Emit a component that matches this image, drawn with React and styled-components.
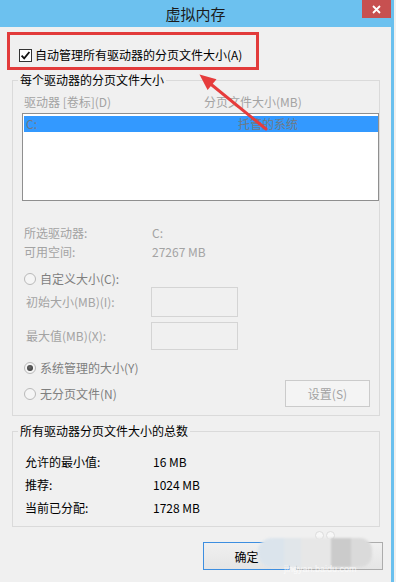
import React from "react";
import styled, { createGlobalStyle } from "styled-components";

const GlobalStyle = createGlobalStyle`
  html, body { margin: 0; padding: 0; background: #f0f0f0; }
  body {
    font-family: "Noto Sans CJK SC", "Microsoft YaHei", "Noto Sans", sans-serif;
    font-size: 12px;
    -webkit-font-smoothing: antialiased;
  }
  * { box-sizing: border-box; }
`;

const Window = styled.div`
  position: relative;
  width: 394px;
  height: 582px;
  border-right: 3px solid #6ac0ee;
  background: #f0f0f0;
  display: flex;
  flex-direction: column;
  overflow: hidden;
`;

const TitleBar = styled.div`
  flex-shrink: 0;
  height: 27px;
  background: #6cc1ef;
  display: grid;
  grid-template-columns: 1fr auto 1fr;
  align-items: start;
`;

const Title = styled.div`
  grid-column: 2;
  line-height: 27px;
  font-size: 15px;
  color: #1b1b1b;
`;

const CloseButton = styled.div`
  grid-column: 3;
  justify-self: end;
  width: 29px;
  height: 18px;
  background: #c75050;
  display: flex;
  align-items: center;
  justify-content: center;
`;

const Body = styled.div`
  display: flex;
  flex-direction: column;
  padding-left: 12px;
`;

const CheckRow = styled.div`
  position: relative;
  display: flex;
  align-items: center;
  height: 16px;
  margin-top: 20px;
  padding-left: 7px;
`;

const CheckBox = styled.div`
  width: 13px;
  height: 13px;
  border: 1px solid #333;
  background: #fff;
  display: flex;
  align-items: center;
  justify-content: center;
`;

const Text = styled.span`
  margin-left: ${(p) => p.$ml || 0}px;
  padding-left: ${(p) => p.$pl || 0}px;
  line-height: 16px;
  color: ${(p) => p.$color || "#000"};
  white-space: nowrap;
`;

const Highlight = styled.div`
  position: absolute;
  left: -5px;
  top: -15px;
  width: 252px;
  height: 38px;
  border: 3px solid #e23b3b;
`;

const Group = styled.fieldset`
  width: 368px;
  min-width: 0;
  margin: ${(p) => p.$mt}px 0 0 0;
  padding: 0;
  border: 1px solid #dadada;
`;

const Legend = styled.legend`
  margin-left: 5px;
  padding: 0 2px;
  font-size: 12px;
  line-height: 16px;
  color: #000;
`;

const GroupInner = styled.div`
  display: flex;
  flex-direction: column;
  padding: ${(p) => p.$pad};
`;

const Columns = styled.div`
  display: grid;
  grid-template-columns: ${(p) => p.$cols};
  line-height: ${(p) => p.$lh}px;
  margin-top: ${(p) => p.$mt || 0}px;
  padding-left: ${(p) => p.$pl || 0}px;
  color: ${(p) => p.$color};
  white-space: nowrap;
`;

const ListBox = styled.div`
  margin: 3px 0 0 -2px;
  height: 88px;
  border: 1px solid #8f8f8f;
  background: #fff;
  padding: 2px 0 0 1px;
`;

const ListRow = styled(Columns)`
  background: #3399ff;
  height: 16px;
`;

const RadioRow = styled.div`
  display: flex;
  align-items: center;
  height: ${(p) => p.$h}px;
  margin-top: ${(p) => p.$mt}px;
`;

const Radio = styled.div`
  width: 12px;
  height: 12px;
  border-radius: 50%;
  border: 1px solid #b9b9b9;
  background: #f5f5f5;
  display: flex;
  align-items: center;
  justify-content: center;
  &::after {
    content: "";
    display: ${(p) => (p.$checked ? "block" : "none")};
    width: 6px;
    height: 6px;
    border-radius: 50%;
    background: radial-gradient(circle at 45% 40%, #6a6a6a, #2f2f2f);
  }
`;

const FieldRow = styled.div`
  display: grid;
  grid-template-columns: 127px 87px;
  align-items: center;
  margin-top: ${(p) => p.$mt}px;
`;

const TextBox = styled.div`
  height: ${(p) => p.$h}px;
  border: 1px solid #d4d4d4;
  background: #f0f0f0;
`;

const Button = styled.button`
  width: ${(p) => p.$w}px;
  height: ${(p) => p.$h}px;
  margin: 0 ${(p) => p.$mr || 0}px 0 ${(p) => (p.$push ? "auto" : "0")};
  padding: 0;
  font-family: inherit;
  font-size: 12px;
  border: 1px solid ${(p) => (p.$default ? "#3d8ee0" : p.disabled ? "#cbcbcb" : "#acacac")};
  background: ${(p) =>
    p.disabled ? "#f4f4f4" : "linear-gradient(#f0f0f0, #e5e5e5)"};
  color: ${(p) => (p.disabled ? "#a3a3a3" : "#000")};
`;

const ButtonRow = styled.div`
  display: flex;
  justify-content: flex-end;
  gap: 6px;
  margin-top: 15px;
  padding-right: 8px;
`;

const Arrow = styled.svg`
  position: absolute;
  left: 195px;
  top: 70px;
  pointer-events: none;
`;

const Watermark = styled.div`
  position: absolute;
  left: 258px;
  top: 530px;
  width: 116px;
  height: 44px;
`;

const Blots = styled.div`
  display: flex;
  margin-top: 8px;
  height: 29px;
  filter: blur(0.8px);
`;

const Blot = styled.div`
  width: ${(p) => p.$w}px;
  background: ${(p) => p.$c};
  border-radius: ${(p) => p.$r || "0"};
`;

const Ears = styled.div`
  position: absolute;
  left: 57px;
  top: 1px;
  display: flex;
  gap: 2px;
  &::before, &::after {
    content: "";
    width: 7px;
    height: 7px;
    border-radius: 50%;
    background: #f7f7f7;
    border: 1px solid #dcdcdc;
  }
`;

const Faint = styled.div`
  position: absolute;
  left: 26px;
  top: 34px;
  font-size: 9px;
  line-height: 10px;
  color: rgba(255, 255, 255, 0.75);
  font-family: "Liberation Sans", sans-serif;
  white-space: nowrap;
`;

const DIS = "#a3a3a3";
const RAD = "#7f7f7f";

export default function App() {
  return (
    <>
      <GlobalStyle />
      <Window>
        <TitleBar>
          <Title>虚拟内存</Title>
          <CloseButton>
            <svg width="9" height="9" viewBox="0 0 9 9">
              <path d="M1 1L8 8M8 1L1 8" stroke="#fff" strokeWidth="1.8" />
            </svg>
          </CloseButton>
        </TitleBar>
        <Body>
          <CheckRow>
            <Highlight />
            <CheckBox>
              <svg width="11" height="11" viewBox="0 0 11 11">
                <path d="M1.6 5.6L4.2 8.4L9.4 2" fill="none" stroke="#111" strokeWidth="1.8" />
              </svg>
            </CheckBox>
            <Text $ml={3}>自动管理所有驱动器的分页文件大小(A)</Text>
          </CheckRow>

          <Group $mt={9}>
            <Legend>每个驱动器的分页文件大小</Legend>
            <GroupInner $pad="0 0 8px 11px">
              <Columns $cols="180px 1fr" $lh={16} $mt={6} $color={DIS}>
                <span>驱动器 [卷标](D)</span>
                <span>分页文件大小(MB)</span>
              </Columns>
              <ListBox>
                <ListRow $cols="212px 1fr" $lh={16} $pl={2} $color="#6f7a86">
                  <span>C:</span>
                  <span>托管的系统</span>
                </ListRow>
              </ListBox>
              <Columns $cols="128px 1fr" $lh={19} $mt={22} $color={DIS}>
                <span>所选驱动器:</span>
                <span>C:</span>
                <span>可用空间:</span>
                <span>27267 MB</span>
              </Columns>
              <RadioRow $h={16} $mt={10}>
                <Radio />
                <Text $ml={4} $color={RAD}>自定义大小(C):</Text>
              </RadioRow>
              <FieldRow $mt={0}>
                <Text $pl={2} $color={DIS}>初始大小(MB)(I):</Text>
                <TextBox $h={30} />
              </FieldRow>
              <FieldRow $mt={5}>
                <Text $pl={2} $color={DIS}>最大值(MB)(X):</Text>
                <TextBox $h={28} />
              </FieldRow>
              <RadioRow $h={16} $mt={10}>
                <Radio $checked />
                <Text $ml={4} $color={RAD}>系统管理的大小(Y)</Text>
              </RadioRow>
              <RadioRow $h={27} $mt={4}>
                <Radio />
                <Text $ml={4} $color={RAD}>无分页文件(N)</Text>
                <Button disabled $w={85} $h={27} $push $mr={9}>设置(S)</Button>
              </RadioRow>
            </GroupInner>
          </Group>

          <Group $mt={7}>
            <Legend>所有驱动器分页文件大小的总数</Legend>
            <GroupInner $pad="11px 0 7px 12px">
              <Columns $cols="128px 1fr" $lh={23} $color="#000">
                <span>允许的最小值:</span>
                <span>16 MB</span>
                <span>推荐:</span>
                <span>1024 MB</span>
                <span>当前已分配:</span>
                <span>1728 MB</span>
              </Columns>
            </GroupInner>
          </Group>

          <ButtonRow>
            <Button $default $w={87} $h={28}>确定</Button>
            <Button $w={87} $h={28}>取消</Button>
          </ButtonRow>
        </Body>

        <Arrow width="76" height="64" viewBox="0 0 76 64">
          <line x1="15" y1="13.5" x2="71" y2="59" stroke="#e63c3c" strokeWidth="3" strokeLinecap="round" />
          <polygon points="4.5,4.5 12.6,20 21.5,9.2" fill="#e63c3c" />
        </Arrow>

        <Watermark>
          <Ears />
          <Blots>
            <Blot $w={26} $c="#dbe4ec" $r="14px 0 0 14px" />
            <Blot $w={17} $c="#e1e6ea" />
            <Blot $w={30} $c="#e7e7e7" />
            <Blot $w={20} $c="#cbcbcb" />
            <Blot $w={21} $c="#dadada" $r="0 12px 12px 0" />
          </Blots>
          <Faint>jingyan.baidu.com</Faint>
        </Watermark>
      </Window>
    </>
  );
}
